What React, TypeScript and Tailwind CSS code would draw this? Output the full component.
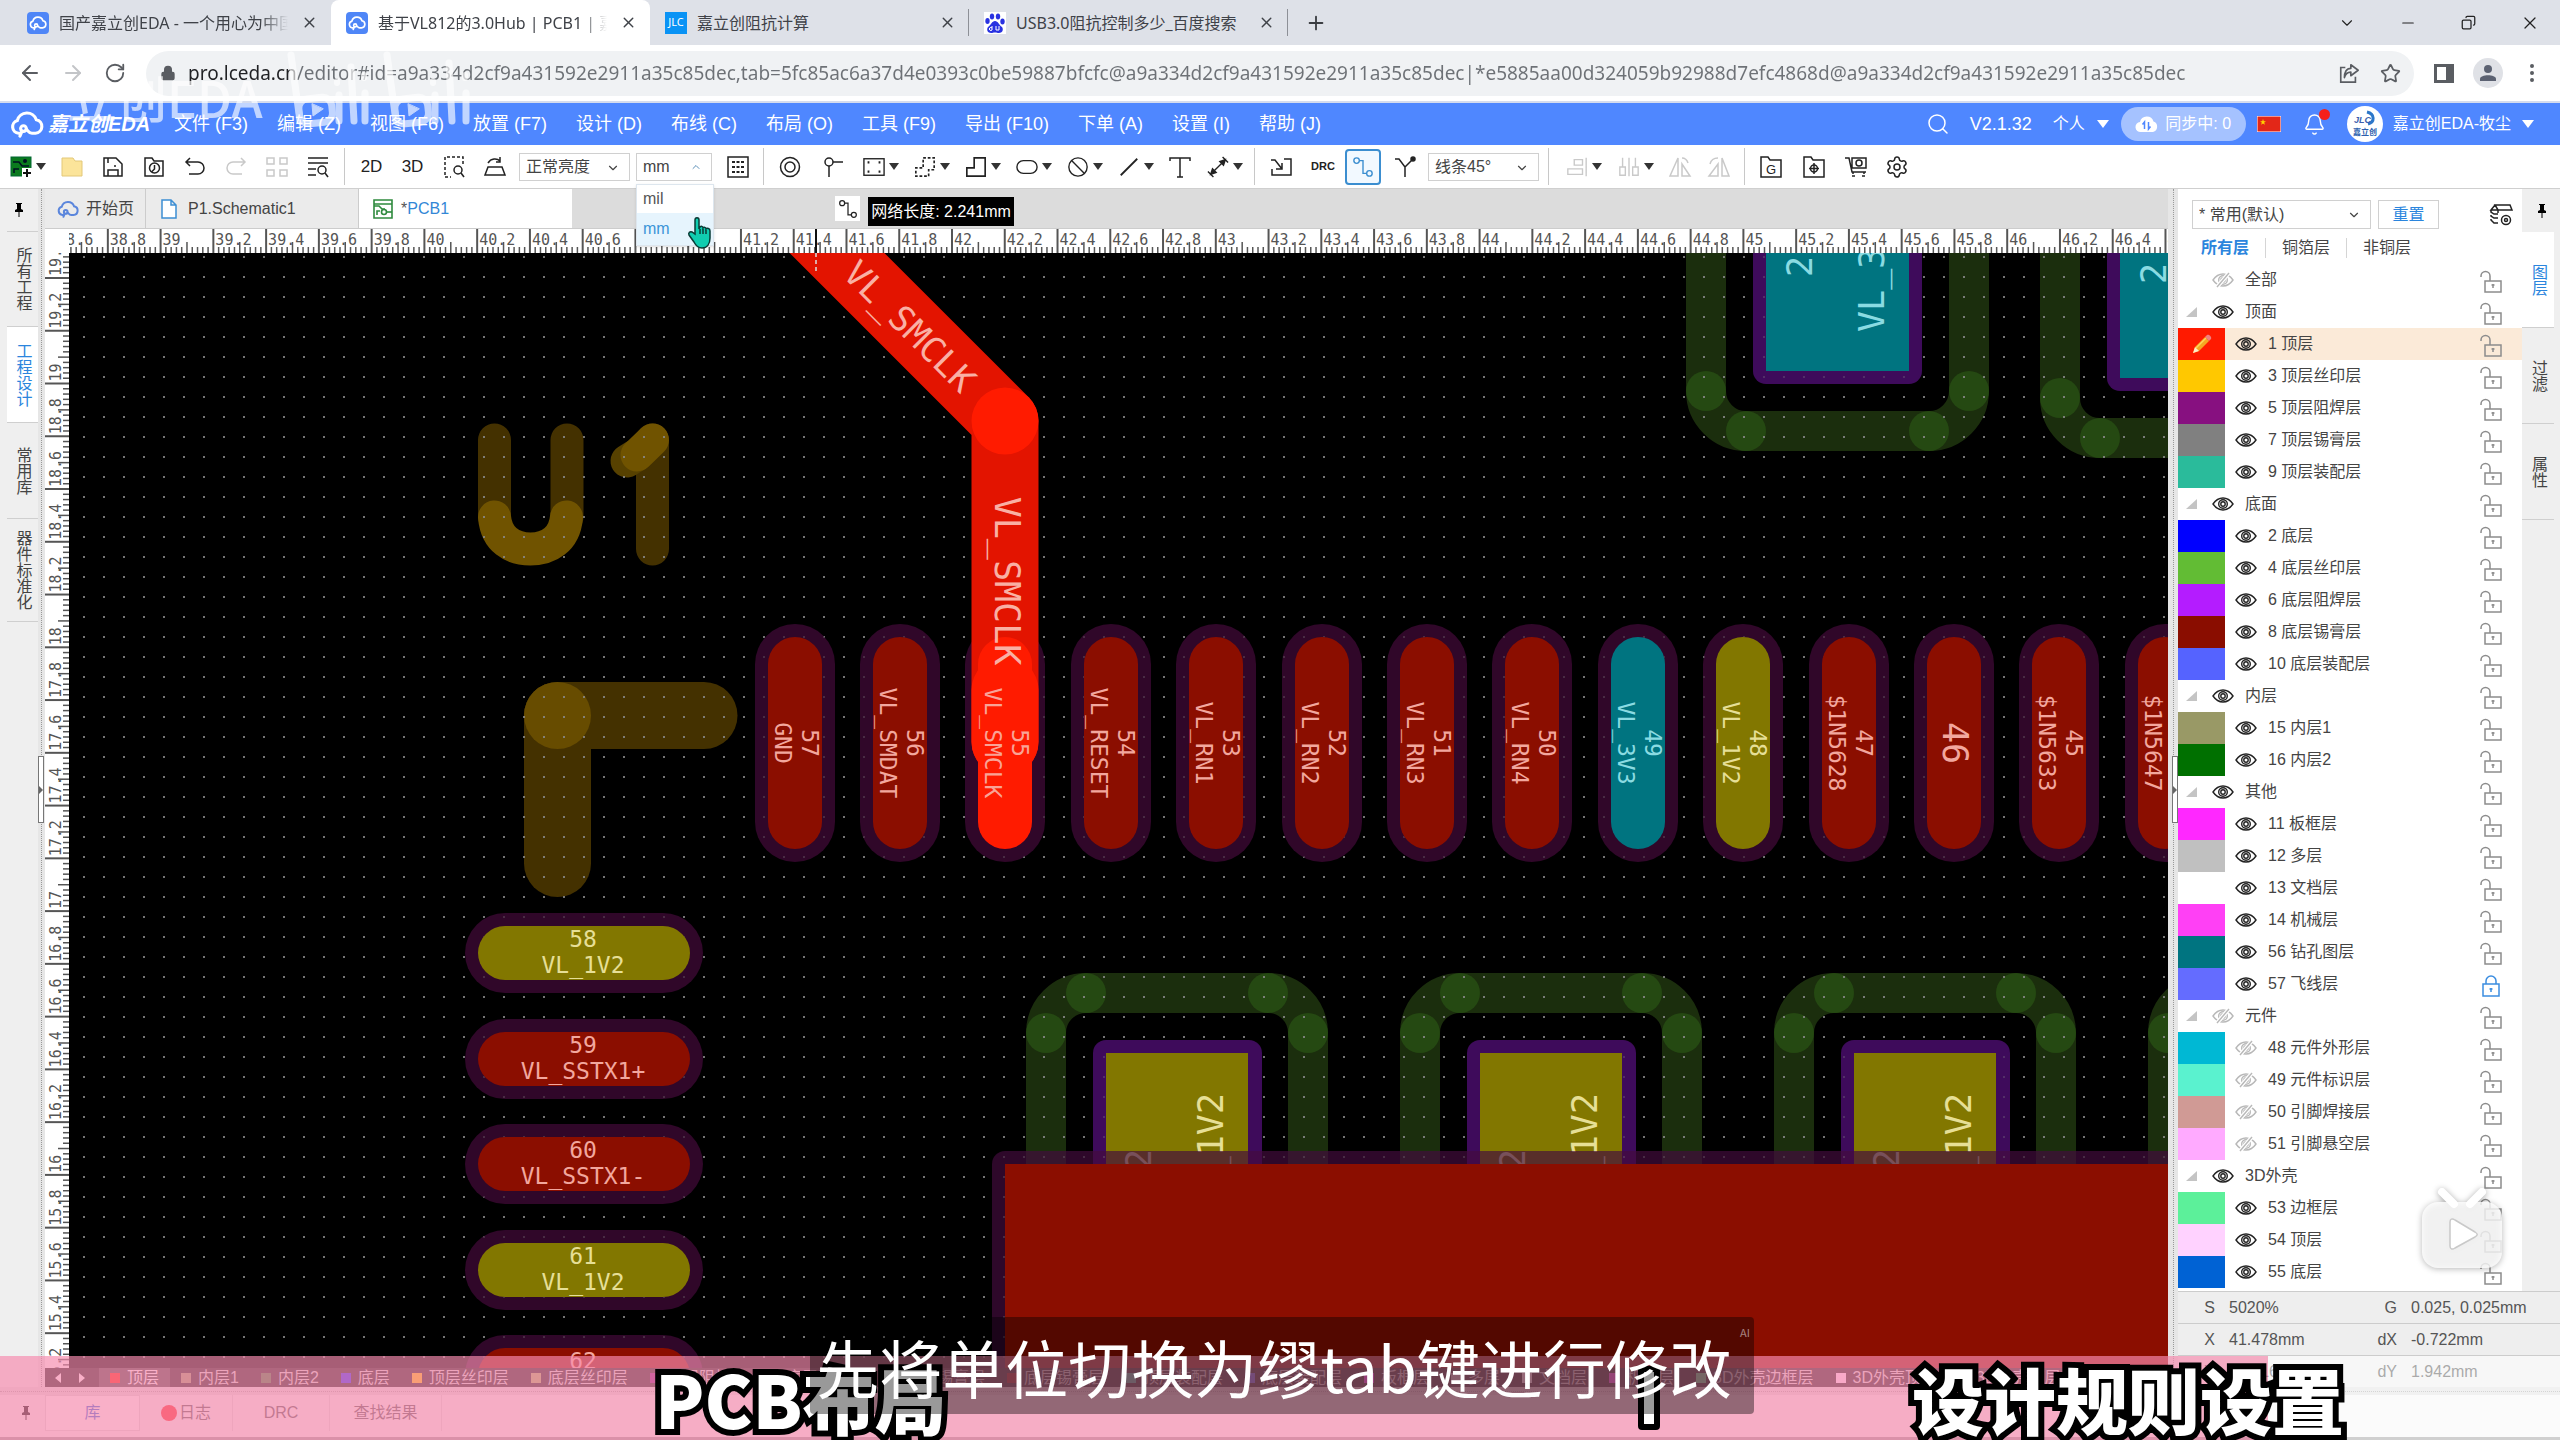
import type { ReactNode } from "react";
import clsx from "clsx";
import {
  ArrowLeft,
  ArrowRight,
  Bell,
  ChevronDown,
  ChevronUp,
  Copy,
  Lock,
  Minus,
  MoreVertical,
  Plus,
  RotateCw,
  Search,
  Settings,
  Star,
  X,
} from "lucide-react";

const URL_TEXT =
  "pro.lceda.cn/editor#id=a9a334d2cf9a431592e2911a35c85dec,tab=5fc85ac6a37d4e0393c0be59887bfcfc@a9a334d2cf9a431592e2911a35c85dec|*e5885aa00d324059b92988d7efc4868d@a9a334d2cf9a431592e2911a35c85dec";

const MENUS = [
  "文件 (F3)",
  "编辑 (Z)",
  "视图 (F6)",
  "放置 (F7)",
  "设计 (D)",
  "布线 (C)",
  "布局 (O)",
  "工具 (F9)",
  "导出 (F10)",
  "下单 (A)",
  "设置 (I)",
  "帮助 (J)",
];

type Layer = { name: string; color?: string; off?: boolean; locked?: boolean; active?: boolean; group?: boolean };

const LAYERS: Layer[] = [
  { name: "顶面", group: true },
  { name: "1 顶层", color: "bg-[#ff1a00]", active: true },
  { name: "3 顶层丝印层", color: "bg-[#ffc800]" },
  { name: "5 顶层阻焊层", color: "bg-[#871080]" },
  { name: "7 顶层锡膏层", color: "bg-[#808080]" },
  { name: "9 顶层装配层", color: "bg-[#2abb9b]" },
  { name: "底面", group: true },
  { name: "2 底层", color: "bg-[#0000ff]" },
  { name: "4 底层丝印层", color: "bg-[#62bc34]" },
  { name: "6 底层阻焊层", color: "bg-[#b41cff]" },
  { name: "8 底层锡膏层", color: "bg-[#8a0d00]" },
  { name: "10 底层装配层", color: "bg-[#5563ff]" },
  { name: "内层", group: true },
  { name: "15 内层1", color: "bg-[#999966]" },
  { name: "16 内层2", color: "bg-[#007000]" },
  { name: "其他", group: true },
  { name: "11 板框层", color: "bg-[#ff28ff]" },
  { name: "12 多层", color: "bg-[#c0c0c0]" },
  { name: "13 文档层", color: "bg-white" },
  { name: "14 机械层", color: "bg-[#ff40f5]" },
  { name: "56 钻孔图层", color: "bg-[#007480]" },
  { name: "57 飞线层", color: "bg-[#646cff]", locked: true },
  { name: "元件", group: true, off: true },
  { name: "48 元件外形层", color: "bg-[#00b8d4]", off: true },
  { name: "49 元件标识层", color: "bg-[#5af2cf]", off: true },
  { name: "50 引脚焊接层", color: "bg-[#d09a95]", off: true },
  { name: "51 引脚悬空层", color: "bg-[#ffaaff]", off: true },
  { name: "3D外壳", group: true },
  { name: "53 边框层", color: "bg-[#5cf09a]" },
  { name: "54 顶层", color: "bg-[#ffd2ff]" },
  { name: "55 底层", color: "bg-[#0062d4]" },
];

const STRIP = [
  ["顶层", "bg-[#ff1a00]"],
  ["内层1", "bg-[#999966]"],
  ["内层2", "bg-[#3c7a3c]"],
  ["底层", "bg-[#2020ff]"],
  ["顶层丝印层", "bg-[#ffc800]"],
  ["底层丝印层", "bg-[#a8b060]"],
  ["顶层阻焊层", "bg-[#871080]"],
  ["底层阻焊层", "bg-[#b41cff]"],
  ["顶层锡膏层", "bg-[#808080]"],
  ["底层锡膏层", "bg-[#8a0d00]"],
  ["顶层装配层", "bg-[#2abb9b]"],
  ["底层装配层", "bg-[#5563ff]"],
  ["板框层", "bg-[#ff28ff]"],
  ["多层", "bg-[#c0c0c0]"],
  ["文档层", "bg-white"],
  ["机械层", "bg-[#ff40f5]"],
  ["3D外壳边框层", "bg-[#5cf09a]"],
  ["3D外壳顶层", "bg-[#ffe8ff]"],
  ["3D外壳底层", "bg-[#0062d4]"],
];

/* ---------- icons ---------- */

function Icon({ children, className = "size-6", sw = 1.5 }: { children: ReactNode; className?: string; sw?: number }) {
  return (
    <svg viewBox="0 0 24 24" className={clsx("shrink-0", className)} fill="none" stroke="currentColor" strokeWidth={sw}>
      {children}
    </svg>
  );
}

function CloudLogo({ className }: { className: string }) {
  return (
    <Icon className={className} sw={2.2}>
      <path d="M7 18.5H6a4.6 4.6 0 0 1-.8-9A7 7 0 0 1 18.6 9a4.8 4.8 0 0 1-.6 9.5h-2.5c-2.2 0-2.6-1.5-4-2.8" strokeLinecap="round" />
      <circle cx="9.5" cy="15.2" r="2" />
      <path d="M8.5 17 7 20.5" strokeLinecap="round" />
    </Icon>
  );
}

function Pin() {
  return (
    <svg viewBox="0 0 12 16" className="h-4 w-3 fill-black">
      <path d="M3 1h6v1H8v5l2 1v2H6.500v5h-1v-5H2V8l2-1V2H3z" />
    </svg>
  );
}

function Eye({ off }: { off?: boolean }) {
  return (
    <svg viewBox="0 0 22 16" className={clsx("h-4 w-[22px]", off ? "text-[#b8b8b8]" : "text-[#222]")} fill="none" stroke="currentColor" strokeWidth="1.4">
      <path d="M1 8c5.500-8 14.500-8 20 0-5.500 8-14.500 8-20 0z" />
      <circle cx="11" cy="8" r="4.3" />
      <circle cx="11" cy="8" r="2.2" />
      {off && <path d="M5 15 17 1" stroke="white" strokeWidth="4" />}
      {off && <path d="M5 15 17 1" />}
    </svg>
  );
}

function LockMark({ locked }: { locked?: boolean }) {
  return (
    <svg viewBox="0 0 22 24" className={clsx("mt-1 h-6 w-[22px]", locked ? "text-[#3b8de0]" : "text-[#8c8c8c]")} fill="none" stroke="currentColor" strokeWidth="1.5">
      {locked ? (
        <>
          <path d="M6 10V7a5 5 0 0 1 10 0v3" />
          <rect x="3" y="10" width="16" height="12" />
          <path d="M11 14v4M9.500 15h3" />
        </>
      ) : (
        <>
          <path d="M1 7V6a4.500 4.500 0 0 1 9 0v5" />
          <rect x="5" y="11" width="16" height="11" />
          <path d="M13 14v4M11.500 15h3" />
        </>
      )}
    </svg>
  );
}

function Caret() {
  return (
    <svg viewBox="0 0 10 7" className="h-[7px] w-[10px] shrink-0 fill-[#333]">
      <path d="M0 0h10L5 7z" />
    </svg>
  );
}

/* ---------- toolbar ---------- */

function Tool({ label, width, caret, dim, children }: { label: string; width: string; caret?: boolean; dim?: boolean; children: ReactNode }) {
  return (
    <button aria-label={label} className={clsx("flex h-full shrink-0 items-center justify-center gap-1", width, dim ? "text-[#c9c9c9]" : "text-[#222]")}>
      {children}
      {caret && <Caret />}
    </button>
  );
}

function Divider({ width }: { width: string }) {
  return (
    <div className={clsx("flex h-[37px] shrink-0 justify-center", width)}>
      <div className="w-px bg-[#c8c8c8]" />
    </div>
  );
}

function Select({ label, value, options, className, up }: { label: string; value: string; options?: string[]; className: string; up?: boolean }) {
  return (
    <div className={clsx("relative shrink-0", className)}>
      <select aria-label={label} defaultValue={value} className="h-full w-full appearance-none border border-[#d0d0d0] bg-white pl-1.5 text-base leading-none text-[#444]">
        {(options ?? [value]).map((o) => (
          <option key={o}>{o}</option>
        ))}
      </select>
      {up ? (
        <ChevronUp className="pointer-events-none absolute top-2 right-2.5 size-3 text-[#5b8fb8]" />
      ) : (
        <ChevronDown className="pointer-events-none absolute top-2 right-2.5 size-3.5 text-[#444]" />
      )}
    </div>
  );
}

function Toolbar() {
  return (
    <div className="relative z-20 flex h-11 shrink-0 items-center border-b border-[#cfcfcf] bg-white pl-[5px]">
      <Tool label="新建" width="w-[46px]" caret>
        <svg viewBox="0 0 22 22" className="size-[22px]">
          <rect x="1" y="1" width="20" height="19" fill="#0b7a1e" stroke="#063" />
          <path d="M3 6h6l3 4h7M4 17v-4h5" stroke="#012" fill="none" strokeWidth="1.5" />
          <circle cx="15" cy="5" r="2" fill="#012" />
          <rect x="12" y="12" width="10" height="10" fill="white" />
          <path d="M17 13v8M13 17h8" stroke="#111" strokeWidth="2" />
        </svg>
      </Tool>
      <Tool label="打开" width="w-[41px]">
        <svg viewBox="0 0 22 22" className="size-[22px]">
          <path d="M1 2h11l2 3h7v15H1z" fill="#fbe49a" stroke="#e3c878" />
        </svg>
      </Tool>
      <Tool label="保存" width="w-[41px]">
        <Icon>
          <path d="M3 3h12l6 6v12H3zM7 3v5M7 21v-6h10v6M14 10v2" />
        </Icon>
      </Tool>
      <Tool label="查看文件" width="w-[41px]">
        <Icon>
          <path d="M3 3h7l2 3h9v15H3z" />
          <circle cx="12.5" cy="13" r="5" />
          <path d="M12.500 10v4l-3 3" />
        </Icon>
      </Tool>
      <Tool label="撤销" width="w-[41px]">
        <Icon>
          <path d="M7 3 3 7l4 4M3 7h12a6 6 0 0 1 0 12H6" />
        </Icon>
      </Tool>
      <Tool label="重做" width="w-[41px]" dim>
        <Icon>
          <path d="m17 3 4 4-4 4M21 7H9a6 6 0 0 0 0 12h9" />
        </Icon>
      </Tool>
      <Tool label="阵列" width="w-[41px]" dim>
        <Icon>
          <path d="M2 3h7v6H2zM15 3h7v6h-7zM2 15h7v6H2zM15 15h7v6h-7z" />
        </Icon>
      </Tool>
      <Tool label="查找" width="w-[41px]">
        <Icon>
          <path d="M2 3h20M2 8h20M2 14h8M2 20h8" />
          <circle cx="16" cy="15" r="4" />
          <path d="m19 18 3 4" />
        </Icon>
      </Tool>
      <Divider width="w-[13px]" />
      <Tool label="2D" width="w-[41px]">
        <span className="text-[17px]">2D</span>
      </Tool>
      <Tool label="3D" width="w-[41px]">
        <span className="text-[17px]">3D</span>
      </Tool>
      <Tool label="框选查找" width="w-[41px]">
        <Icon>
          <path d="M21 9V2H3v20h6" strokeDasharray="3 2" />
          <circle cx="16" cy="15" r="4" />
          <path d="m19 18 3 4" />
        </Icon>
      </Tool>
      <Tool label="翻转视图" width="w-[41px]">
        <Icon>
          <path d="M5 12h14l3 8H2zM5 8c3-5 9-5 12-2M17 2v5h-4" />
        </Icon>
      </Tool>
      <Select label="亮度" value="正常亮度" className="ml-1 h-[28px] w-[111px]" />
      <div className="relative ml-1.5">
        <Select label="单位" value="mm" options={["mil", "mm"]} className="h-[28px] w-[76px]" up />
        <div className="absolute top-[31px] left-0 flex h-[62px] w-[78px] flex-col border border-[#dde6ee] bg-white text-base shadow">
          <button className="h-7 pl-1.5 text-left text-[#555]">mil</button>
          <button className="h-8 bg-[#e6f4fd] pl-1.5 text-left text-[#3b95d8]">mm</button>
        </div>
      </div>
      <Tool label="网格" width="ml-[5px] w-[41px]">
        <Icon>
          <rect x="2" y="2" width="20" height="20" />
          <path d="M6 7h12M6 12h12M6 17h12" strokeDasharray="3 1.5" strokeWidth="2" />
        </Icon>
      </Tool>
      <Divider width="w-[11px]" />
      <Tool label="焊盘" width="w-[42px]">
        <Icon>
          <circle cx="12" cy="12" r="9.5" />
          <circle cx="12" cy="12" r="5" />
        </Icon>
      </Tool>
      <Tool label="过孔" width="w-[44px]">
        <Icon>
          <circle cx="8" cy="7" r="4" />
          <path d="M12 7h10M8 11v11" />
        </Icon>
      </Tool>
      <Tool label="板框" width="w-[51px]" caret>
        <Icon className="size-[22px]">
          <rect x="1" y="3" width="22" height="18" />
          <path d="M5 7h2M17 7h2M5 17h2M17 17h2" strokeWidth="2.5" />
        </Icon>
      </Tool>
      <Tool label="区域" width="w-[51px]" caret>
        <Icon className="size-[22px]" sw={1.8}>
          <path d="M10 2h12v13h-6v7H2v-9h8z" strokeDasharray="3 2" />
        </Icon>
      </Tool>
      <Tool label="铺铜" width="w-[51px]" caret>
        <Icon className="size-[22px]" sw={1.8}>
          <path d="M10 2h12v20H2v-9h8z" />
        </Icon>
      </Tool>
      <Tool label="填充" width="w-[51px]" caret>
        <Icon className="size-[22px]">
          <rect x="1" y="5" width="22" height="14" rx="7" />
        </Icon>
      </Tool>
      <Tool label="禁止区域" width="w-[51px]" caret>
        <Icon className="size-[22px]">
          <circle cx="12" cy="12" r="10" />
          <path d="m5 5 14 14" />
        </Icon>
      </Tool>
      <Tool label="线条" width="w-[51px]" caret>
        <Icon className="size-[22px]" sw={2}>
          <path d="M3 21 21 3" />
        </Icon>
      </Tool>
      <Tool label="文本" width="w-[38px]">
        <Icon>
          <path d="M2 6V3h20v3M12 3v19M9 22h6" />
        </Icon>
      </Tool>
      <Tool label="尺寸" width="w-[51px]" caret>
        <Icon className="size-[22px]">
          <path d="M4 20 20 4M1 17l6 6M17 1l6 6" />
          <path d="m4 20 2-6 4 4zM20 4l-2 6-4-4z" fill="currentColor" />
        </Icon>
      </Tool>
      <Divider width="w-[9px]" />
      <Tool label="导入" width="w-[44px]">
        <Icon>
          <path d="M15 4h7v16H3v-6M2 5h4l7 9M13 8v6H7" />
        </Icon>
      </Tool>
      <Tool label="DRC" width="w-10">
        <span className="text-[11px] font-bold">DRC</span>
      </Tool>
      <button aria-label="布线" className="ml-0.5 flex h-9 w-9 shrink-0 items-center justify-center rounded border-2 border-[#3b8ed0] bg-[#f2f9ff] text-[#3b8ed0]">
        <Icon className="size-[22px]">
          <circle cx="5" cy="5" r="3" />
          <circle cx="19" cy="19" r="3" />
          <path d="M8 5h4v14h4" />
        </Icon>
      </button>
      <Tool label="差分布线" width="w-[47px]">
        <Icon>
          <path d="M2 4h4l6 8v10M12 12l7-7" />
          <circle cx="20" cy="4" r="2" fill="currentColor" />
        </Icon>
      </Tool>
      <Select label="拐角" value="线条45°" className="h-[28px] w-[111px]" />
      <Divider width="w-[18px]" />
      <Tool label="对齐" width="w-[53px]" caret dim>
        <Icon className="size-[22px]">
          <path d="M22 2v20M9 4h9v6H9zM2 14h16v6H2z" />
        </Icon>
      </Tool>
      <Tool label="分布" width="w-[51px]" caret dim>
        <Icon className="size-[22px]">
          <path d="M12 2v20M2 12h6v9H2zM16 12h6v9h-6zM5 2v10M19 2v10" />
        </Icon>
      </Tool>
      <Tool label="左旋" width="w-[37px]" dim>
        <Icon>
          <path d="M10 3v18H2zM14 21h8L14 9zM14 3c3 0 5 2 6 5" />
        </Icon>
      </Tool>
      <Tool label="右旋" width="w-[41px]" dim>
        <Icon>
          <path d="M15 3v18h7zM11 21H2l9-12zM3 9c1-4 4-6 8-6" />
        </Icon>
      </Tool>
      <Divider width="w-[10px]" />
      <Tool label="Gerber" width="w-[44px]">
        <span className="relative flex">
          <Icon>
            <path d="M2 2h7l2 3h11v17H2z" />
          </Icon>
          <span className="absolute inset-0 flex items-center justify-center pt-1.5 text-[13px] leading-none">G</span>
        </span>
      </Tool>
      <Tool label="坐标文件" width="w-[41px]">
        <Icon>
          <path d="M2 2h7l2 3h11v17H2zM12 8v11M7 13.500h10" />
          <circle cx="12" cy="13.5" r="3.5" />
        </Icon>
      </Tool>
      <Tool label="下单" width="w-[43px]">
        <Icon>
          <path d="M1 3h4l3 14h14M8 3h14v10H8zM9 17v2M20 17v2M8 21h3M18 21h3" />
          <circle cx="15" cy="8" r="3" />
        </Icon>
      </Tool>
      <Tool label="设置" width="w-10">
        <Settings className="size-6" strokeWidth={1.5} />
      </Tool>
      {/* hand pointer over the unit menu */}
      <svg viewBox="0 0 24 32" className="absolute top-[72px] left-[687px] h-8 w-6">
        <path
          d="M8 3c0-3 4-3 4 0v9l1-2c1-1 3-1 3 1 1-1 3-1 3 1 1-1 4-1 4 2v7c0 6-3 10-8 10-4 0-6-2-8-6l-5-7c-1-2 1-4 3-3l3 2z"
          fill="#10cdb0"
          stroke="#0a3b36"
          strokeWidth="1.5"
        />
        <path d="M13 12v5M16 12v5M19 13v4" stroke="#0a3b36" strokeWidth="1.5" />
      </svg>
    </div>
  );
}

/* ---------- browser chrome ---------- */

function Favicon() {
  return (
    <span className="flex size-[22px] shrink-0 items-center justify-center rounded bg-[#4f86f7] text-white">
      <CloudLogo className="size-[18px]" />
    </span>
  );
}

function Tab({ title, icon, width, active, fade, divider }: { title: string; icon: ReactNode; width: string; active?: boolean; fade?: boolean; divider?: boolean }) {
  return (
    <div className={clsx("flex h-full shrink-0 items-center gap-2.5 pl-[15px] text-[#3f4248]", width, active && "rounded-t-lg bg-white")}>
      {icon}
      <button className={clsx("min-w-0 flex-1 overflow-hidden text-left text-base whitespace-nowrap", fade && "mask-[linear-gradient(90deg,#000_88%,transparent)]")}>{title}</button>
      <button aria-label="关闭标签页" className="flex w-[22px] justify-center">
        <X className="size-[17px]" />
      </button>
      <div className={clsx("h-[27px] w-px", divider ? "bg-[#8d9097]" : "bg-transparent")} />
    </div>
  );
}

function BrowserChrome() {
  return (
    <div className="shrink-0 font-['Noto_Sans','Noto_Sans_CJK_SC',sans-serif]">
      <div className="flex h-[45px] items-center bg-[#dee1e8] pl-3">
        <Tab title="国产嘉立创EDA - 一个用心为中国人定制" icon={<Favicon />} width="w-[319px]" fade />
        <Tab title="基于VL812的3.0Hub | PCB1 | 嘉立创EDA" icon={<Favicon />} width="w-[319px]" active fade />
        <Tab
          title="嘉立创阻抗计算"
          icon={<span className="flex size-[22px] items-center justify-center bg-[#0a93f5] text-[11px] text-white">JLC</span>}
          width="w-[319px]"
          divider
        />
        <Tab
          title="USB3.0阻抗控制多少_百度搜索"
          icon={
            <svg viewBox="0 0 22 22" className="size-[22px] shrink-0">
              <rect width="22" height="22" fill="white" />
              <g fill="#2932e1">
                <ellipse cx="3.5" cy="9" rx="2.2" ry="3" />
                <ellipse cx="8" cy="4.5" rx="2.2" ry="3" />
                <ellipse cx="14" cy="4.5" rx="2.2" ry="3" />
                <ellipse cx="18.5" cy="9.5" rx="2.2" ry="3" />
                <path d="M11 9c3 0 4 4 7 6 2 3 0 6-3 6-2 0-2-.5-4-.5s-2 .5-4 .5c-3 0-5-3-3-6 3-2 4-6 7-6z" />
              </g>
              <path d="M8 14v4M8 16a1.500 1.500 0 1 0 0 2M12 14v4h3v-4" stroke="white" fill="none" />
            </svg>
          }
          width="w-[319px]"
          divider
        />
        <button aria-label="新标签页" className="ml-[17px] text-[#3a3d42]">
          <Plus className="size-[22px]" />
        </button>
        <div className="ml-auto flex h-9 items-center text-[#222]">
          <button aria-label="搜索标签页" className="flex w-[61px] justify-center">
            <ChevronDown className="size-[18px]" strokeWidth={1.5} />
          </button>
          <button aria-label="最小化" className="flex w-[61px] justify-center">
            <Minus className="size-[18px]" strokeWidth={1.5} />
          </button>
          <button aria-label="还原" className="flex w-[61px] justify-center">
            <Copy className="size-[15px] -scale-x-100" strokeWidth={2} />
          </button>
          <button aria-label="关闭" className="flex w-[61px] justify-center">
            <X className="size-[20px]" strokeWidth={1.5} />
          </button>
        </div>
      </div>
      <div className="flex h-[58px] items-center border-b-2 border-[#d5dcee] bg-white pr-4 pl-[18px] text-[#5a5d62]">
        <button aria-label="后退">
          <ArrowLeft className="size-6" />
        </button>
        <button aria-label="前进" className="ml-[19px] text-[#c3c5c8]">
          <ArrowRight className="size-6" />
        </button>
        <button aria-label="刷新" className="ml-[19px]">
          <RotateCw className="size-[22px]" />
        </button>
        <div className="ml-5 flex h-[45px] min-w-0 flex-1 items-center rounded-full bg-[#f0f2f4] pr-[13px] pl-3.5">
          <Lock className="size-4 fill-[#5a5d62]" />
          <input
            aria-label="地址"
            readOnly
            value={URL_TEXT}
            className="ml-3 min-w-0 flex-1 bg-[linear-gradient(90deg,#202124_109px,#6d7176_109px)] bg-clip-text text-[19px] text-transparent outline-none"
          />
          <button aria-label="分享" className="mr-5">
            <Icon className="size-[22px]" sw={1.8}>
              <path d="M8 6H3v16h16v-6" />
              <path d="M14 3l8 6-8 6v-4c-4 0-6 2-7 6 0-6 2-10 7-10z" strokeLinejoin="round" />
            </Icon>
          </button>
          <button aria-label="收藏">
            <Star className="size-[21px]" />
          </button>
        </div>
        <button aria-label="侧边栏" className="ml-5 flex h-[19px] w-5 border-[3px] border-r-8 border-[#5a5d62]" />
        <button aria-label="用户" className="ml-[19px] flex size-[30px] items-center justify-center rounded-full bg-[#dfe1e6]">
          <svg viewBox="0 0 20 20" className="size-5 fill-[#5c6272]">
            <circle cx="10" cy="6" r="4" />
            <path d="M2 18v-2c0-5 16-5 16 0v2z" />
          </svg>
        </button>
        <button aria-label="更多" className="ml-[17px]">
          <MoreVertical className="size-6" />
        </button>
      </div>
    </div>
  );
}

function MenuBar() {
  return (
    <div className="flex h-[42px] shrink-0 items-center bg-[#4f87ff] pr-[26px] pl-2.5 text-[18px] text-white">
      <CloudLogo className="size-[34px]" />
      <span className="ml-1 w-[126px] text-[20px] font-bold whitespace-nowrap italic">嘉立创EDA</span>
      <nav className="flex gap-[29px]">
        {MENUS.map((m) => (
          <button key={m} className="whitespace-nowrap">
            {m}
          </button>
        ))}
      </nav>
      <div className="ml-auto flex items-center">
        <button aria-label="搜索">
          <Search className="size-[24px]" strokeWidth={1.5} />
        </button>
        <span className="ml-5">V2.1.32</span>
        <button className="ml-[21px] flex items-center gap-3 text-base">
          个人
          <svg viewBox="0 0 12 8" className="h-2 w-3 fill-white">
            <path d="M0 0h12L6 8z" />
          </svg>
        </button>
        <button className="ml-3 flex h-[34px] w-[125px] items-center justify-center gap-1.5 rounded-full bg-[#a5c2ff] text-base">
          <svg viewBox="0 0 24 20" className="h-5 w-6">
            <path d="M6 18a5 5 0 0 1-1-10 7 7 0 0 1 13.500-.5A5.500 5.500 0 0 1 18 18z" fill="white" />
            <path d="M9.500 15V8l-2 2.500M13.500 8v7l2-2.500" stroke="#4f87ff" fill="none" strokeWidth="1.5" />
          </svg>
          同步中: 0
        </button>
        <svg viewBox="0 0 24 16" className="ml-[11px] h-4 w-6">
          <rect width="24" height="16" fill="#e32718" stroke="white" />
          <path d="m6 3 .8 2.200h2.200L7.200 6.600l.7 2.200L6 7.500 4.100 8.800l.7-2.200L3 5.200h2.200z" fill="#ffd500" />
        </svg>
        <button aria-label="通知" className="relative ml-[22px]">
          <Bell className="size-[23px]" strokeWidth={1.5} />
          <span className="absolute -top-1 -right-1 size-[11px] rounded-full bg-[#f5201a]" />
        </button>
        <svg viewBox="0 0 36 36" className="ml-[21px] size-9">
          <circle cx="18" cy="18" r="18" fill="white" />
          <path d="M20 6c8 2 8 10 1 12" stroke="#2d77c9" strokeWidth="3" fill="none" />
          <text x="7" y="17" fontSize="9" fontStyle="italic" fontWeight="bold" fill="#3d5fae">
            JLC
          </text>
          <text x="18" y="29" fontSize="8" fontWeight="bold" textAnchor="middle" fill="#2d5fae">
            嘉立创
          </text>
        </svg>
        <button className="ml-2.5 flex items-center gap-[11px] text-base whitespace-nowrap">
          嘉立创EDA-牧尘
          <svg viewBox="0 0 12 8" className="h-2 w-3 fill-white">
            <path d="M0 0h12L6 8z" />
          </svg>
        </button>
      </div>
    </div>
  );
}

/* ---------- rulers ---------- */

const PX_PER_MM = 263.8;

function range(from: number, to: number, step: number) {
  const n = Math.round((to - from) / step);
  return Array.from({ length: n + 1 }, (_, i) => Number((from + i * step).toFixed(2)));
}

const isMajor = (v: number) => Math.round(v * 100) % 20 === 0;
const isMid = (v: number) => Math.round(v * 100) % 20 === 10;

function TopRuler() {
  const px = (v: number) => 883 + (v - 42) * PX_PER_MM;
  return (
    <svg className="h-6 min-w-0 flex-1 font-['DejaVu_Sans_Mono',monospace]">
      {range(38.6, 46.8, 0.02).map((v) => (
        <line key={v} x1={px(v)} x2={px(v)} y1={isMajor(v) ? 0 : isMid(v) ? 13 : 18} y2={24} stroke="#555" strokeWidth={isMajor(v) ? 2 : 1.5} />
      ))}
      {range(38.6, 46.6, 0.2).map((v) => (
        <text key={v} x={px(v) + 2} y={16} fontSize={15} fill="#555">
          {v}
        </text>
      ))}
      <line x1={747} x2={747} y1={0} y2={24} stroke="#111" strokeWidth={2} />
    </svg>
  );
}

function SideRuler() {
  const py = (v: number) => 130.5 + (19 - v) * PX_PER_MM;
  return (
    <svg className="h-full w-6 shrink-0 bg-white font-['DejaVu_Sans_Mono',monospace]">
      {range(15, 19.6, 0.02).map((v) => (
        <line key={v} y1={py(v)} y2={py(v)} x1={isMajor(v) ? 0 : isMid(v) ? 13 : 18} x2={24} stroke="#555" strokeWidth={isMajor(v) ? 2 : 1.5} />
      ))}
      {range(15, 19.4, 0.2).map((v) => (
        <text key={v} transform={`translate(16 ${py(v) - 2}) rotate(-90)`} fontSize={15} fill="#555">
          {v}
        </text>
      ))}
    </svg>
  );
}

/* ---------- board ---------- */

const TOP_PADS = [
  ["57", "GND"],
  ["56", "VL_SMDAT"],
  ["55", "VL_SMCLK"],
  ["54", "VL_RESET"],
  ["53", "VL_RN1"],
  ["52", "VL_RN2"],
  ["51", "VL_RN3"],
  ["50", "VL_RN4"],
  ["49", "VL_3V3"],
  ["48", "VL_1V2"],
  ["47", "$1N5628"],
  ["46", ""],
  ["45", "$1N5633"],
  ["44", "$1N5647"],
];

const SIDE_PADS = [
  ["58", "VL_1V2"],
  ["59", "VL_SSTX1+"],
  ["60", "VL_SSTX1-"],
  ["61", "VL_1V2"],
  ["62", "VL_SSRX1+"],
];

function netColors(net: string) {
  if (net === "VL_1V2") return ["#827700", "#e6df96"];
  if (net === "VL_3V3") return ["#007480", "#8adbe2"];
  if (net === "VL_SMCLK") return ["#ff1b00", "#f9a396"];
  return ["#8b0e00", "#f2a79e"];
}

function TopPad({ n, net, x }: { n: string; net: string; x: number }) {
  const [fill, ink] = netColors(net);
  const big = net === "";
  return (
    <g>
      <rect x={x - 27} y={637} width={54} height={212} rx={27} fill={fill} />
      <g fill={ink} textAnchor="middle" fontSize={big ? 35 : 23}>
        <text transform={`translate(${big ? x - 11 : x + 7} 743) rotate(90)`}>{n}</text>
        {!big && <text transform={`translate(${x - 20} 743) rotate(90)`}>{net}</text>}
      </g>
    </g>
  );
}

function SidePad({ n, net, y }: { n: string; net: string; y: number }) {
  const [fill, ink] = netColors(net);
  return (
    <g textAnchor="middle" fontSize={23}>
      <rect x={465} y={y - 40} width={238} height={80} rx={40} fill="#300729" />
      <rect x={478} y={y - 27} width={212} height={54} rx={27} fill={fill} />
      <text x={583} y={y - 6} fill={ink}>
        {n}
      </text>
      <text x={583} y={y + 20} fill={ink}>
        {net}
      </text>
    </g>
  );
}

function LowerPart({ x }: { x: number }) {
  return (
    <g>
      <path d={`M${x} 1300V1033A40 40 0 0 1 ${x + 40} 993H${x + 222}A40 40 0 0 1 ${x + 262} 1033V1300`} fill="none" stroke="#1b2e0d" strokeWidth={40} />
      <g fill="#254912">
        <circle cx={x} cy={1033} r={20} />
        <circle cx={x + 40} cy={993} r={20} />
        <circle cx={x + 222} cy={993} r={20} />
        <circle cx={x + 262} cy={1033} r={20} />
      </g>
      <rect x={x + 47} y={1040} width={169} height={260} rx={13} fill="#3e0b5b" />
      <rect x={x + 60} y={1053} width={142} height={240} fill="#827700" />
      <g fill="#e6df96" fontSize={35} textAnchor="end">
        <text transform={`translate(${x + 177} 1093) rotate(-90)`}>VL_1V2</text>
        <text transform={`translate(${x + 105} 1149) rotate(-90)`}>2</text>
      </g>
    </g>
  );
}

function UpperPart({ x, y }: { x: number; y: number }) {
  return (
    <g>
      <path d={`M${x} 200V${y - 40}A40 40 0 0 0 ${x + 40} ${y}H${x + 223}A40 40 0 0 0 ${x + 263} ${y - 40}V200`} fill="none" stroke="#1b2e0d" strokeWidth={40} />
      <g fill="#254912">
        <circle cx={x} cy={y - 40} r={20} />
        <circle cx={x + 40} cy={y} r={20} />
        <circle cx={x + 223} cy={y} r={20} />
        <circle cx={x + 263} cy={y - 40} r={20} />
      </g>
      <rect x={x + 47} y={200} width={169} height={y - 247} rx={13} fill="#3e0b5b" />
      <rect x={x + 60} y={200} width={143} height={y - 260} fill="#007480" />
      <g fill="#8adbe2" fontSize={35}>
        <text transform={`translate(${x + 178} ${y - 99}) rotate(-90)`}>VL_3V3</text>
        <text transform={`translate(${x + 106} ${y - 154}) rotate(-90)`}>2</text>
      </g>
    </g>
  );
}

function Board() {
  const padX = (i: number) => Math.round(794.5 + 105.4 * i);
  const padY = (i: number) => Math.round(953.3 + 105.4 * i);
  return (
    <svg className="h-full min-w-0 flex-1 bg-black font-['DejaVu_Sans_Mono',monospace]">
      <defs>
        <pattern id="dots" x="14" y="3" width="20" height="20" patternUnits="userSpaceOnUse">
          <rect width="2" height="2" fill="#8a8a8a" />
        </pattern>
        {/* the grid is hidden under copper and dimmed under solder mask */}
        <mask id="dotmask">
          <rect width="100%" height="100%" fill="white" />
          <g transform="translate(-69 -253)">
            <g fill="#555">
              {TOP_PADS.map(([n], i) => (
                <rect key={n} x={padX(i) - 40} y={624} width={80} height={238} rx={40} />
              ))}
              {SIDE_PADS.map(([n], i) => (
                <rect key={n} x={465} y={padY(i) - 40} width={238} height={80} rx={40} />
              ))}
              {[1093, 1467, 1841].map((x) => (
                <rect key={x} x={x} y={1040} width={169} height={260} />
              ))}
              <rect x={992} y={1151} width={3000} height={2000} />
              <rect x={1753} y={200} width={169} height={184} />
            </g>
            <rect x={1005} y={1164} width={3000} height={2000} />
            {TOP_PADS.map(([n], i) => (
              <rect key={n} x={padX(i) - 27} y={637} width={54} height={212} rx={27} />
            ))}
            {SIDE_PADS.map(([n], i) => (
              <rect key={n} x={478} y={padY(i) - 27} width={212} height={54} rx={27} />
            ))}
            {[1106, 1480, 1854].map((x) => (
              <rect key={x} x={x} y={1053} width={142} height={200} />
            ))}
            <rect x={1766} y={200} width={143} height={171} />
            <rect x={2120} y={200} width={143} height={178} />
            <path d="M705 121 1005 421V742" fill="none" stroke="black" strokeWidth={67} />
          </g>
        </mask>
      </defs>
      <g transform="translate(-69 -253)">
        {/* silkscreen: designator and corner mark */}
        <g stroke="#443100" fill="none" strokeLinecap="round" strokeWidth={33}>
          <path d="M494.500 440v77M567 440v77M652.500 440v109" />
          <path d="M494.500 517c2 23 18 32 36 32s34-9 36-32" stroke="#705300" />
          <path d="M627 461l8-5" stroke="#574100" />
          <path d="M637 455 652.500 440" stroke="#705300" />
        </g>
        <g stroke="#443100" strokeLinecap="round" strokeWidth={67}>
          <path d="M557.500 715.500v148" />
          <path d="M557.500 715.500h146.500" />
        </g>
        <circle cx={557.5} cy={715.5} r={33.5} fill="#674c00" />

        {SIDE_PADS.map(([n, net], i) => (
          <SidePad key={n} n={n} net={net} y={padY(i)} />
        ))}
        {TOP_PADS.map(([n], i) => (
          <rect key={n} x={padX(i) - 40} y={624} width={80} height={238} rx={40} fill="#300729" />
        ))}
        <path d="M705 121 1005 421V742" fill="none" stroke="#e31400" strokeWidth={67} strokeLinecap="round" strokeLinejoin="round" />
        <circle cx={1005} cy={421} r={33.5} fill="#ff1b00" />
        <path d="M1005 690V742" stroke="#ff1b00" strokeWidth={67} strokeLinecap="round" />
        {TOP_PADS.map(([n, net], i) => (
          <TopPad key={n} n={n} net={net} x={padX(i)} />
        ))}
        <g fill="#f9b0a4" fontSize={35} textAnchor="middle">
          <text transform="translate(901 335) rotate(45)">VL_SMCLK</text>
          <text transform="translate(995 581) rotate(90)">VL_SMCLK</text>
        </g>

        <UpperPart x={1706} y={431} />
        <UpperPart x={2060} y={438} />
        {[1046, 1420, 1794, 2168].map((x) => (
          <LowerPart key={x} x={x} />
        ))}
        <rect x={992} y={1151} width={3000} height={2000} rx={13} fill="#440c3e" fillOpacity={0.68} />
        <rect x={1005} y={1164} width={3000} height={2000} fill="#8b0e00" />
        <path d="M816 253v20" stroke="#ddd" strokeWidth={1.5} strokeDasharray="4 3" />
      </g>
      <rect width="100%" height="100%" fill="url(#dots)" opacity={0.85} mask="url(#dotmask)" />
    </svg>
  );
}

/* ---------- docks ---------- */

function SideTab({ name, height, active }: { name: string; height: string; active?: boolean }) {
  return (
    <button
      className={clsx(
        "flex w-full items-center justify-center border-b border-[#cfcfcf] text-base leading-none [writing-mode:vertical-rl]",
        height,
        active ? "bg-white text-[#2b85dd]" : "bg-[#efefef] text-[#444]",
      )}
    >
      {name}
    </button>
  );
}

function Splitter({ className, flip }: { className: string; flip?: boolean }) {
  return (
    <div className={clsx("relative flex shrink-0 justify-center bg-[#e6e6e6]", className)}>
      <div className="w-px border-l border-dotted border-[#999]" />
      <div className={clsx("absolute top-[567px] flex h-[67px] w-1.5 items-center border border-[#777] bg-white", flip ? "right-0" : "left-0")}>
        <svg viewBox="0 0 5 10" className="h-2.5 w-[5px] fill-[#666]">
          <path d="M0 0 5 5 0 10z" />
        </svg>
      </div>
    </div>
  );
}

function DocTabs() {
  return (
    <div className="flex h-10 shrink-0 border-b border-[#ccc] bg-[#dcdcdc] text-base text-[#444]">
      <button className="flex w-[101px] items-center gap-[7px] border-r border-[#ccc] bg-[#ebebeb] pl-3">
        <CloudLogo className="size-[22px] text-[#5b86dc]" />
        开始页
      </button>
      <button className="flex w-[213px] items-center gap-[11px] border-r border-[#ccc] bg-[#ebebeb] pl-[15px]">
        <svg viewBox="0 0 16 20" className="h-5 w-4" fill="white" stroke="#3d8fd4" strokeWidth="1.5">
          <path d="M1 1h9l5 5v13H1zM10 1v5h5" />
        </svg>
        P1.Schematic1
      </button>
      <button className="flex w-[213px] items-center gap-2 bg-white pl-3.5 text-[#3387d6]">
        <svg viewBox="0 0 20 20" className="size-5" fill="none" stroke="#2f8a3e" strokeWidth="1.6">
          <path d="M1 1h18v18H1zM1 7h5l3 3h3M4 16v-4h3M1 5h18" />
          <circle cx="11" cy="13" r="2.5" />
          <path d="M14 13h5" />
        </svg>
        <span>
          <span className="text-[#555]">*</span>PCB1
        </span>
      </button>
      <div className="ml-[263px] flex items-center gap-2">
        <span className="flex size-[25px] items-center justify-center bg-white text-[#222]">
          <Icon className="size-[20px]">
            <circle cx="5" cy="5" r="3" />
            <circle cx="19" cy="19" r="3" />
            <path d="M8 5h4v14h4" />
          </Icon>
        </span>
        <span className="mt-1.5 flex h-[29px] w-[146px] items-center justify-center bg-black whitespace-nowrap text-white">网络长度: 2.241mm</span>
      </div>
    </div>
  );
}

function LayerStrip() {
  return (
    <div className="flex h-[19px] shrink-0 items-center overflow-hidden bg-[#1c1c1c] pl-2.5 text-base leading-none text-[#d5d5d5]">
      <button aria-label="上一个" className="flex w-6 items-center">
        <svg viewBox="0 0 6 10" className="h-2.5 w-1.5 fill-white">
          <path d="M6 0v10L0 5z" />
        </svg>
      </button>
      <button aria-label="下一个" className="flex w-5 items-center">
        <svg viewBox="0 0 6 10" className="h-2.5 w-1.5 fill-white">
          <path d="M0 0v10l6-5z" />
        </svg>
      </button>
      {STRIP.map(([name, color], i) => (
        <button key={name} className={clsx("flex h-full shrink-0 items-center gap-[7px] px-[11px] whitespace-nowrap", i === 0 && "bg-[#444] text-white")}>
          <span className={clsx("size-2.5", color)} />
          {name}
        </button>
      ))}
    </div>
  );
}

function LayerRow({ layer }: { layer: Layer }) {
  const { name, color, off, locked, active, group } = layer;
  return (
    <li className={clsx("flex h-8 items-center pr-5", active && "bg-[#fbead8]")}>
      {group ? (
        <button aria-label="折叠" className="mr-[15px] ml-[7px] flex w-3 justify-center">
          <svg viewBox="0 0 12 12" className="size-3 fill-[#c4c4c4]">
            <path d="M12 1v10H1z" />
          </svg>
        </button>
      ) : (
        <span className={clsx("mr-2.5 flex h-full w-[47px] items-center justify-center", color)}>
          {active && (
            <svg viewBox="0 0 22 22" className="size-[22px]">
              <path d="M2 20l2-6L14 4l4 4L8 18z" fill="#f5a623" />
              <path d="M2 20l2-6 4 4z" fill="#ffe9c9" />
              <path d="m14 4 2-2c2-1 5 2 4 4l-2 2z" fill="#f08080" />
              <path d="M5 15 15 5" stroke="#ffd45a" strokeWidth="1.5" />
            </svg>
          )}
        </span>
      )}
      <button aria-label={`显示 ${name}`}>
        <Eye off={off} />
      </button>
      <span className="ml-[11px] flex-1 whitespace-nowrap">{name}</span>
      <button aria-label={`锁定 ${name}`}>
        <LockMark locked={locked} />
      </button>
    </li>
  );
}

function LayerPanel() {
  return (
    <div className="flex w-[344px] shrink-0 flex-col overflow-hidden bg-white text-base text-[#444]">
      <div className="mt-[11px] flex h-[29px] shrink-0 items-center pl-3.5">
        <Select label="图层配置" value="* 常用(默认)" className="h-full w-[179px]" />
        <button className="ml-[7px] h-full w-[61px] border border-[#d0d0d0] text-[#2b85dd]">重置</button>
        <button aria-label="图层管理" className="ml-[50px] text-[#222]">
          <Icon className="size-6">
            <path d="M6 2h15l2 5H9zM6 2 2 7h7M2 7v2l3 2h4M2 12v1l3 2h4M2 16v1l3 3h4M9 7v3" />
            <circle cx="17" cy="17" r="4.5" />
            <circle cx="17" cy="17" r="1.5" />
          </Icon>
        </button>
      </div>
      <div className="flex h-[35px] shrink-0 items-center pt-0.5 pl-[23px]">
        <button className="pr-4 font-bold text-[#2b85dd]">所有层</button>
        <button className="border-l border-[#d5d5d5] px-4 leading-5">铜箔层</button>
        <button className="border-l border-[#d5d5d5] px-4 leading-5">非铜层</button>
      </div>
      <ul>
        <li className="flex h-8 items-center pr-5 pl-[34px]">
          <button aria-label="显示全部">
            <Eye off />
          </button>
          <span className="ml-[11px] flex-1">全部</span>
          <button aria-label="锁定全部">
            <LockMark />
          </button>
        </li>
        {LAYERS.map((l) => (
          <LayerRow key={l.name} layer={l} />
        ))}
      </ul>
    </div>
  );
}

function StatusRow({ items }: { items: string[] }) {
  return (
    <div className="grid h-8 grid-cols-[37px_132px_50px_1fr] items-center border-t border-[#ccc] text-base text-[#555]">
      <span className="text-right">{items[0]}</span>
      <span className="pl-3.5">{items[1]}</span>
      <span className="text-right">{items[2]}</span>
      <span className="pl-3.5">{items[3]}</span>
    </div>
  );
}

function BottomDock() {
  return (
    <div className="flex h-[53px] shrink-0 flex-col border-b-[3px] border-[#a0a0a0] bg-[#f6f6f6]">
      <div className="flex h-2 items-center bg-[#e2e2e2]">
        <div className="w-full border-t border-dotted border-[#aaa]" />
      </div>
      <div className="flex h-9 text-base text-[#555]">
        <button aria-label="固定" className="flex w-[45px] items-center justify-center pl-1.5">
          <Pin />
        </button>
        <button className="w-[95px] border border-[#ddd] bg-white text-[#2b62dd]">库</button>
        <button className="flex w-[93px] items-center justify-center gap-0.5 border-r border-[#ddd]">
          <span className="size-4 rounded-full bg-[#f22]" />
          日志
        </button>
        <button className="w-[97px] border-r border-[#ddd]">DRC</button>
        <button className="w-[112px] border-r border-[#ddd]">查找结果</button>
      </div>
    </div>
  );
}

/* ---------- video overlays ---------- */

const CAPTION = "absolute whitespace-nowrap font-['Noto_Sans_CJK_SC',sans-serif] text-[72px] leading-none font-black text-white [-webkit-text-stroke:12px_black] [paint-order:stroke_fill]";

function Overlays() {
  return (
    <div className="pointer-events-none absolute inset-0 z-30 overflow-hidden">
      <div className="absolute top-[66px] left-[67px] text-[50px] leading-[60px] font-medium text-white/65 font-['Noto_Sans_CJK_SC',sans-serif]">立创EDA</div>
      <svg viewBox="0 0 190 80" className="absolute top-[49px] left-[286px] h-20 w-[190px] opacity-65" fill="none" stroke="white" strokeWidth="7" strokeLinecap="round">
        <g>
          <path d="M5 6 14 72" />
          <rect x="13" y="49" width="33" height="25" rx="9" transform="rotate(-6 30 60)" />
          <path d="m26 55 1 12 10-7z" fill="white" strokeWidth="1" />
          <path d="M53 46v26M65 18l3 54M79 44v28" />
          <path d="M51 32v2M78 26v3" strokeWidth="6" />
        </g>
        <g transform="translate(96 0)">
          <path d="M5 6 14 72" />
          <rect x="13" y="49" width="33" height="25" rx="9" transform="rotate(-6 30 60)" />
          <path d="m26 55 1 12 10-7z" fill="white" strokeWidth="1" />
          <path d="M53 46v26M67 14l3 58M84 44v28" />
          <path d="M51 32v2M83 26v3" strokeWidth="6" />
        </g>
      </svg>

      <svg viewBox="0 0 88 88" className="absolute right-[54px] bottom-[164px] size-[88px] drop-shadow-[0_1px_3px_rgba(0,0,0,0.35)]">
        <g fill="white" fillOpacity="0.8">
          <path d="M24 4 36 16M64 4 52 16" stroke="white" strokeWidth="8" strokeLinecap="round" />
          <rect x="4" y="14" width="80" height="66" rx="16" />
        </g>
        <path d="M32 34c0-3 2-4 5-2l20 12c3 2 3 3 0 5L37 60c-3 2-5 1-5-2z" fill="white" stroke="#c9c9c9" strokeWidth="1.5" />
      </svg>

      <div className="absolute inset-x-0 bottom-0 flex h-[84px]">
        <div className="flex-1 bg-[#f68aae]/68" />
        <div className="w-[292px] bg-white/50" />
      </div>
      <div className={clsx(CAPTION, "bottom-[6px] left-[655px]")}>PCB布局</div>
      <div className="absolute bottom-[10px] left-[1638px] h-[64px] w-[22px] rounded border-[6px] border-black bg-white" />
      <div className={clsx(CAPTION, "bottom-[6px] left-[1912px]")}>设计规则设置</div>
      <div className="absolute bottom-[26px] left-[810px] flex h-[97px] w-[944px] items-center justify-center rounded bg-black/40 pr-4 font-['Noto_Sans_CJK_SC',sans-serif] text-[63px] leading-none whitespace-nowrap text-white">
        先将单位切换为缪tab键进行修改
        <span className="absolute top-2.5 right-1 text-[11px] leading-none text-white/50">AI</span>
      </div>
    </div>
  );
}

export default function App() {
  return (
    <div className="relative flex h-screen w-full flex-col overflow-hidden bg-[#efefef] font-['Liberation_Sans','Noto_Sans_CJK_SC',sans-serif]">
      <BrowserChrome />
      <MenuBar />
      <Toolbar />
      <div className="flex min-h-0 flex-1">
        <div className="flex w-[38px] shrink-0 flex-col bg-[#efefef] pl-[7px]">
          <button aria-label="固定" className="flex h-[43px] items-center justify-center border-b border-[#cfcfcf] pr-2">
            <Pin />
          </button>
          <SideTab name="所有工程" height="h-[95px]" />
          <SideTab name="工程设计" height="h-24" active />
          <SideTab name="常用库" height="h-24" />
          <SideTab name="器件标准化" height="h-[103px]" />
        </div>
        <Splitter className="w-[7px]" />
        <div className="flex min-w-0 flex-1 flex-col">
          <DocTabs />
          <div className="flex h-6 shrink-0 bg-white">
            <div className="w-6 shrink-0" />
            <TopRuler />
          </div>
          <div className="flex min-h-0 flex-1">
            <SideRuler />
            <Board />
          </div>
          <LayerStrip />
        </div>
        <Splitter className="w-2.5" flip />
        <div className="flex w-[382px] shrink-0 flex-col">
          <div className="flex min-h-0 flex-1">
            <LayerPanel />
            <div className="w-8 shrink-0">
              <button aria-label="固定" className="flex h-[43px] w-full items-center justify-center pl-2">
                <Pin />
              </button>
              <SideTab name="图层" height="h-24" active />
              <SideTab name="过滤" height="h-24" />
              <SideTab name="属性" height="h-24" />
            </div>
          </div>
          <div className="shrink-0 bg-[#eeeeee]">
            <StatusRow items={["S", "5020%", "G", "0.025, 0.025mm"]} />
            <StatusRow items={["X", "41.478mm", "dX", "-0.722mm"]} />
            <StatusRow items={["Y", "17.216mm", "dY", "1.942mm"]} />
          </div>
        </div>
      </div>
      <BottomDock />
      <Overlays />
    </div>
  );
}
